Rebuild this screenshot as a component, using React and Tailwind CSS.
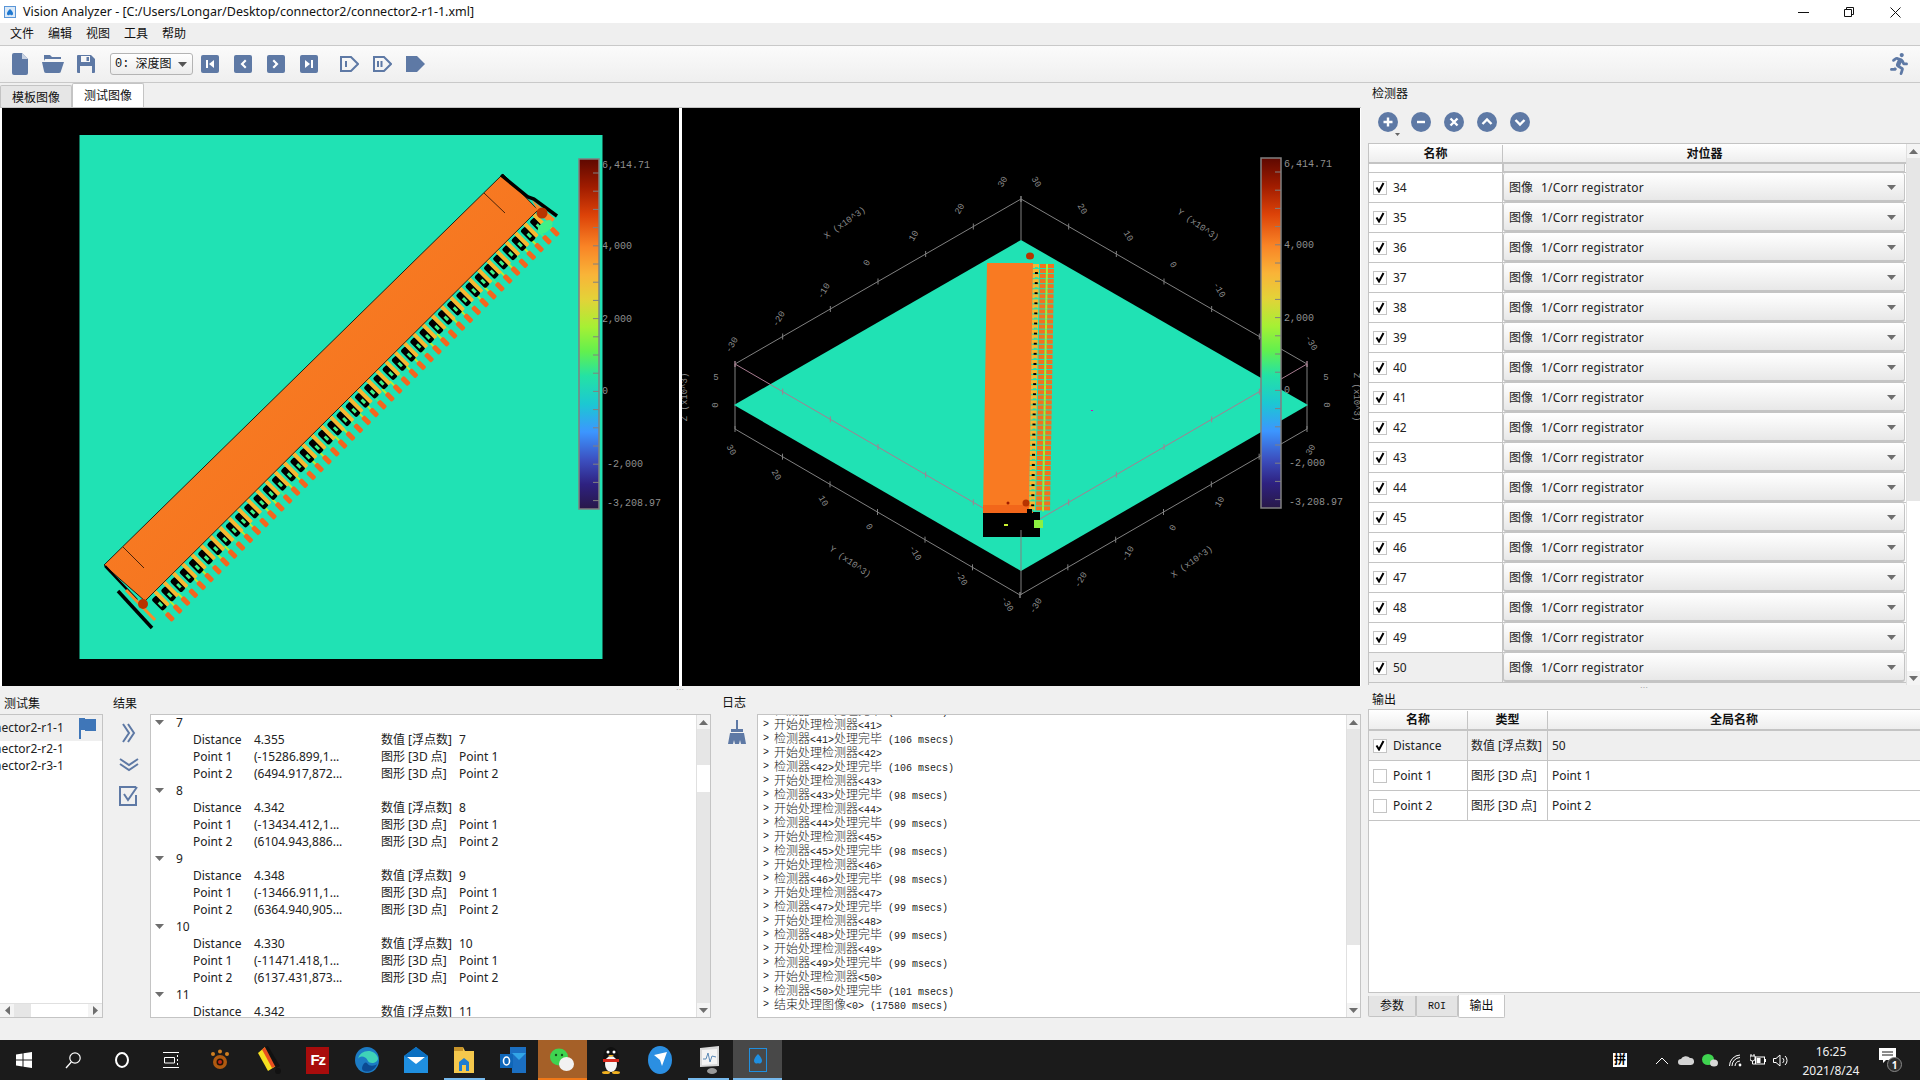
import React from "react";
import { FaRunning } from "react-icons/fa";

const BLUE = "#5e79a5";
const uiFont = "font-['Noto_Sans','Noto_Sans_CJK_SC',sans-serif]";

const cbStops = [
  [0, "#5e0800"], [0.08, "#a01c00"], [0.16, "#dc4208"], [0.25, "#f98426"], [0.33, "#f9b438"],
  [0.4, "#e4d238"], [0.48, "#a6f034"], [0.55, "#62f04e"], [0.62, "#24e2a4"], [0.7, "#1cc8d2"],
  [0.78, "#3c96ff"], [0.86, "#3c50c0"], [0.93, "#2e2180"], [1, "#281848"],
];

function ColorBar({ id, x, y }) {
  const labels = [
    ["6,414.71", 6, 2], ["4,000", 87, 2], ["2,000", 160, 2], ["0", 232, 2], ["-2,000", 305, 7], ["-3,208.97", 344, 7],
  ];
  const minor = Array.from({ length: 19 }, (_, i) => 14 + i * 18.2);
  return (
    <g>
      <defs>
        <linearGradient id={id} x1="0" y1="0" x2="0" y2="1">
          {cbStops.map(([o, c]) => <stop key={o} offset={o} stopColor={c} />)}
        </linearGradient>
      </defs>
      <rect x={x} y={y} width="20" height="350" fill={`url(#${id})`} stroke="#808080" strokeWidth="1.5" />
      {minor.map((m) => <line key={m} x1={x + 14} x2={x + 20} y1={y + m} y2={y + m} stroke="#808080" />)}
      {labels.map(([t, dy, dx]) => (
        <text key={t} x={x + 21 + dx} y={y + dy + 3} fill="#8f8f8f" fontSize="10" fontFamily="Liberation Mono, monospace">{t}</text>
      ))}
    </g>
  );
}

function LeftView() {
  // the terminal blocks and the pin tips repeat at different pitches along the connector edge
  const blocks = Array.from({ length: 42 }, (_, i) => {
    const x = 152 + (i / 41) * 378;
    return { i, x, y: 747 - x };
  });
  const tips = Array.from({ length: 50 }, (_, i) => {
    const x = 150 + (i / 49) * 385;
    return { i, x, y: 747 - x };
  });
  return (
    <svg viewBox="2 108 677 578" className="w-[677px] h-[578px] bg-black block">
      <rect x="79.5" y="135" width="523" height="524" fill="#20e2b4" />
      <defs>
        <linearGradient id="bodyGrad" x1="0" y1="0" x2="1" y2="1">
          <stop offset="0" stopColor="#fb8526" />
          <stop offset="1" stopColor="#f26a1c" />
        </linearGradient>
      </defs>
      {tips.map((p) => (
        <g key={p.i} transform={`translate(${p.x} ${p.y}) rotate(45)`}>
          <rect x="17" y="-1" width="7" height="2" fill={p.i % 3 ? "#b0f030" : "#3ff08a"} />
          <rect x="23" y="-2.5" width="10" height="5" rx="1.5" fill="#f4651e" />
        </g>
      ))}
      {blocks.map((p) => (
        <g key={p.i} transform={`translate(${p.x} ${p.y}) rotate(45)`}>
          <rect x="3" y="-3" width="16" height="7" rx="2" fill="#000" />
          <rect x="-1" y="-6.5" width="20" height="4" rx="1" fill="#f8b830" />
          <rect x="10" y="-1" width="5" height="3" fill="#3ff08a" />
        </g>
      ))}
      <polygon points="503,174 538,210 145,601 104,565" fill="url(#bodyGrad)" stroke="#000" strokeWidth="0.8" />
      <line x1="484" y1="193" x2="505" y2="213" stroke="#000" strokeWidth="0.7" />
      <line x1="123" y1="547" x2="144" y2="568" stroke="#000" strokeWidth="0.7" />
      <polygon points="532,200 555,219 550,224 538,212" fill="#f98a2a" />
      <polyline points="501,175 528,197 534,199 557,216" fill="none" stroke="#000" strokeWidth="3.5" />
      <polyline points="105,566 137,600" fill="none" stroke="#000" strokeWidth="2.5" />
      <polyline points="118,591 152,628" fill="none" stroke="#000" strokeWidth="3.5" />
      <polyline points="126,590 155,620" fill="none" stroke="#f98a2a" strokeWidth="3" />
      <circle cx="542" cy="213" r="5.5" fill="#b83400" />
      <circle cx="143" cy="604" r="5" fill="#b83400" />
      <ellipse cx="545" cy="227" rx="9" ry="5" transform="rotate(-40 545 227)" fill="#3ff08a" />
      <ColorBar id="cb1" x={579} y={159} />
    </svg>
  );
}

const ticks = [
  [1003, 182, -60, "30"], [1036, 182, 60, "30"], [960, 209, -60, "20"], [914, 236, -60, "10"], [867, 263, -60, "0"],
  [824, 291, -60, "-10"], [779, 319, -60, "-20"], [732, 345, -60, "-30"], [1082, 209, 60, "20"], [1128, 236, 60, "10"],
  [1173, 265, 60, "0"], [1219, 290, 60, "-10"], [1311, 343, 60, "-30"], [731, 450, 60, "30"], [776, 475, 60, "20"],
  [823, 501, 60, "10"], [869, 527, 60, "0"], [915, 553, 60, "-10"], [961, 578, 60, "-20"], [1007, 604, 60, "-30"],
  [1036, 606, -60, "-30"], [1081, 580, -60, "-20"], [1128, 554, -60, "-10"], [1173, 528, -60, "0"], [1220, 502, -60, "10"],
  [1311, 450, -60, "30"], [845, 223, -35, "X (x10^3)"], [1198, 225, 35, "Y (x10^3)"], [850, 562, 35, "Y (x10^3)"],
  [1192, 562, -35, "X (x10^3)"], [685, 397, -90, "Z (x10^3)"], [1356, 397, 90, "Z (x10^3)"], [716, 378, 0, "5"],
  [716, 405, -90, "0"], [1326, 378, 0, "5"], [1326, 405, 90, "0"],
];

function Edge({ from, to, color = "#808080", n = 6 }) {
  const marks = Array.from({ length: n + 1 }, (_, i) => [
    from[0] + ((to[0] - from[0]) * i) / n,
    from[1] + ((to[1] - from[1]) * i) / n,
  ]);
  return (
    <g stroke={color} strokeWidth="1">
      <line x1={from[0]} y1={from[1]} x2={to[0]} y2={to[1]} />
      {marks.map(([x, y]) => <line key={x} x1={x} y1={y - 3} x2={x} y2={y + 3} />)}
    </g>
  );
}

function RightView() {
  const rows = Array.from({ length: 49 }, (_, i) => i);
  return (
    <svg viewBox="682 108 678 578" className="w-[678px] h-[578px] bg-black block">
      <Edge from={[735, 364]} to={[1021, 199]} />
      <Edge from={[1307, 364]} to={[1021, 199]} />
      <Edge from={[735, 429]} to={[1020, 595]} />
      <Edge from={[1307, 429]} to={[1020, 595]} />
      <line x1="735" y1="364" x2="735" y2="429" stroke="#808080" />
      <line x1="1307" y1="364" x2="1307" y2="429" stroke="#808080" />
      <line x1="1021" y1="199" x2="1021" y2="240" stroke="#808080" />
      <polygon points="1021,240 1308,405 1021,571 734,405" fill="#20e2b4" />
      <Edge from={[735, 364]} to={[1021, 530]} color="#a87c90" />
      <Edge from={[1307, 364]} to={[1021, 530]} color="#a87c90" />
      <rect x="983" y="512" width="57" height="25" fill="#000" />
      <line x1="1021" y1="530" x2="1021" y2="595" stroke="#808080" />
      <polygon points="987,263 1033,263 1029,512 983,512" fill="#f97a22" />
      <rect x="983" y="505" width="50" height="8" fill="#f2661a" />
      {rows.map((i) => {
        const y = 264 + i * 5.05;
        const s = -(i * 4) / 49;
        return (
          <g key={i}>
            <rect x={1033 + s} y={y} width="6" height="4" fill="#f9b530" />
            <rect x={1035 + s} y={y + 3} width="3" height="2" fill={i % 2 ? "#000" : "#2fe0a0"} />
            <rect x={1040 + s} y={y} width="6" height="4" fill="#f4711e" />
            <rect x={1046 + s} y={y} width="2" height="5" fill="#a8f034" />
            <rect x={1048 + s} y={y} width="6" height="4" fill="#f4711e" />
          </g>
        );
      })}
      <ellipse cx="1030" cy="256" rx="4" ry="3.5" fill="#b83400" />
      <circle cx="1026" cy="503" r="3.5" fill="#b83400" />
      <circle cx="1008" cy="503" r="1.5" fill="#a01c00" />
      <rect x="1034" y="520" width="9" height="8" fill="#8cf040" />
      <rect x="1004" y="524" width="4" height="2" fill="#c8f030" />
      <rect x="1027" y="509" width="5" height="4" fill="#000" />
      <rect x="1091" y="410" width="2" height="1" fill="#e000c0" />
      {ticks.map(([x, y, r, t]) => (
        <text key={`${x}-${y}`} x={x} y={y} transform={`rotate(${r} ${x} ${y})`} textAnchor="middle" dominantBaseline="middle"
          fill="#8a8a8a" fontSize="9" fontFamily="Liberation Mono, monospace">{t}</text>
      ))}
      <ColorBar id="cb2" x={1261} y={158} />
    </svg>
  );
}

function Check({ on }) {
  return (
    <span className="w-[14px] h-[14px] bg-white border border-[#c4c4c4] flex items-center justify-center shrink-0">
      {on && (
        <svg width="10" height="11" viewBox="0 0 10 11">
          <path d="M1.5 5.5 L4 9.5 L8.5 1" fill="none" stroke="#000" strokeWidth="2" />
        </svg>
      )}
    </span>
  );
}

function Tri({ up, color = "#6e6e6e" }) {
  return (
    <svg width="9" height="5" viewBox="0 0 9 5">
      <path d={up ? "M0 5 L4.5 0 L9 5Z" : "M0 0 L9 0 L4.5 5Z"} fill={color} />
    </svg>
  );
}

function Combo() {
  return (
    <div className="h-full flex-1 flex items-center pl-[5px] pr-[8px] pt-[2px] rounded-[3px] border-b-2 border-x border-[#c4c4c4] bg-gradient-to-b from-white to-[#e8e8e8] text-[12px] text-[#222]">
      <span>图像</span>
      <span className="ml-[8px] tracking-[0.2px]">1/Corr registrator</span>
      <span className="ml-auto flex"><Tri /></span>
    </div>
  );
}

function ScrollV({ before, fill }) {
  return (
    <div className="w-[14px] h-full shrink-0 flex flex-col bg-[#f4f4f4] border-l border-[#e0e0e0]">
      <div className="h-[14px] flex items-center justify-center shrink-0"><Tri up /></div>
      <div className={`${before} bg-[#e6e6e6] shrink-0`} />
      <div className={`${fill} bg-white`} />
      <div className="flex-1 bg-[#e6e6e6]" />
      <div className="h-[14px] flex items-center justify-center shrink-0"><Tri /></div>
    </div>
  );
}

function DetectorTable() {
  const rows = Array.from({ length: 17 }, (_, i) => 34 + i);
  return (
    <div className="ml-[1px] w-[552px] h-[542px] flex border-t border-[#c4c4c4] border-l">
      <div className="flex-1 flex flex-col min-w-0 overflow-hidden">
        <div className="h-[20px] flex shrink-0 pt-[1px] border-b-2 border-[#c4c4c4] bg-gradient-to-b from-white to-[#eeeeee] font-bold text-[12px] text-[#111]">
          <div className="w-[134px] flex items-center justify-center border-r border-[#c4c4c4]">名称</div>
          <div className="flex-1 flex items-center justify-center">对位器</div>
        </div>
        <div className="h-[9px] shrink-0 flex border-b border-[#c4c4c4] bg-white">
          <div className="w-[134px] border-r border-[#c4c4c4]" />
          <div className="flex-1 bg-[#ececec] border-x border-b border-[#c4c4c4] mr-[1px]" />
        </div>
        {rows.map((n) => (
          <div key={n} className={`h-[30px] shrink-0 flex border-b border-[#c4c4c4] ${n === 50 ? "bg-[#efefef]" : "bg-white"}`}>
            <div className="w-[134px] flex items-center pl-[4px] gap-[6px] border-r border-[#c4c4c4] text-[12px] text-[#222]">
              <Check on />
              <span>{n}</span>
            </div>
            <div className="flex-1 flex pr-[1px]"><Combo /></div>
          </div>
        ))}
      </div>
      <ScrollV before="h-[343px]" fill="h-[171px]" />
    </div>
  );
}

function OutputTable() {
  const rows = [
    ["Distance", "数值 [浮点数]", "50", true],
    ["Point 1", "图形 [3D 点]", "Point 1", false],
    ["Point 2", "图形 [3D 点]", "Point 2", false],
  ];
  return (
    <div className="ml-[1px] w-[552px] h-[284px] flex flex-col border border-r-0 border-[#c4c4c4] bg-white">
      <div className="h-[21px] flex shrink-0 pt-[1px] border-b-2 border-[#c4c4c4] bg-gradient-to-b from-white to-[#eeeeee] font-bold text-[12px] text-[#111]">
        <div className="w-[99px] flex items-center justify-center border-r border-[#c4c4c4]">名称</div>
        <div className="w-[80px] flex items-center justify-center border-r border-[#c4c4c4]">类型</div>
        <div className="flex-1 flex items-center justify-center">全局名称</div>
      </div>
      {rows.map(([a, b, c, on]) => (
        <div key={a} className={`h-[30px] flex shrink-0 border-b border-[#c4c4c4] text-[12px] text-[#222] ${on ? "bg-[#efefef]" : "bg-white"}`}>
          <div className="w-[99px] flex items-center pl-[4px] gap-[6px] border-r border-[#c4c4c4]">
            <Check on={on} />
            <span>{a}</span>
          </div>
          <div className="w-[80px] flex items-center pl-[3px] border-r border-[#c4c4c4] whitespace-nowrap">{b}</div>
          <div className="flex-1 flex items-center pl-[4px]">{c}</div>
        </div>
      ))}
    </div>
  );
}

function TestList() {
  return (
    <div className="w-[103px] h-[304px] flex flex-col border border-l-0 border-[#c4c4c4] bg-white text-[12px] text-[#222]">
      <div className="h-[26px] bg-[#efefef] flex items-center justify-between pr-[5px] overflow-hidden">
        <span className="-ml-[6px]">nector2-r1-1</span>
        <svg width="19" height="22" viewBox="0 0 19 22">
          <path d="M1 1 H7 V2 H18 V14 H7 V13 H3 V22 H1Z" fill="#3f76b8" />
        </svg>
      </div>
      <div className="-mt-[1px] overflow-hidden">
        {["nector2-r2-1", "nector2-r3-1"].map((t) => (
          <div key={t} className="h-[17px] flex items-center -ml-[6px]">{t}</div>
        ))}
      </div>
      <div className="mt-auto h-[14px] flex bg-[#f4f4f4] border-t border-[#e0e0e0]">
        <div className="w-[14px] flex items-center justify-center"><svg width="5" height="9" viewBox="0 0 5 9"><path d="M5 0 L0 4.5 L5 9Z" fill="#6e6e6e" /></svg></div>
        <div className="w-[17px] bg-[#e6e6e6]" />
        <div className="flex-1 bg-white" />
        <div className="w-[14px] flex items-center justify-center"><svg width="5" height="9" viewBox="0 0 5 9"><path d="M0 0 L5 4.5 L0 9Z" fill="#6e6e6e" /></svg></div>
      </div>
    </div>
  );
}

const results = [
  ["7", "4.355", "(-15286.899,1...", "(6494.917,872..."],
  ["8", "4.342", "(-13434.412,1...", "(6104.943,886..."],
  ["9", "4.348", "(-13466.911,1...", "(6364.940,905..."],
  ["10", "4.330", "(-11471.418,1...", "(6137.431,873..."],
  ["11", "4.342", "", ""],
];

function ResultRow({ name, value, type, extra }) {
  return (
    <div className="h-[17px] flex items-center whitespace-nowrap">
      <span className="w-[61px] pl-[42px] box-content">{name}</span>
      <span className="w-[127px]">{value}</span>
      <span className="w-[78px]">{type}</span>
      <span>{extra}</span>
    </div>
  );
}

function ResultsTree() {
  return (
    <div className="w-[561px] h-[304px] flex border border-[#c4c4c4] bg-white text-[12px] text-[#222]">
      <div className="flex-1 overflow-hidden">
        <div className="-mt-[1px]">
          {results.map(([id, d, p1, p2]) => (
            <div key={id}>
              <div className="h-[17px] flex items-center">
                <span className="ml-[4px] w-[16px] flex"><Tri /></span>
                <span className="ml-[5px]">{id}</span>
              </div>
              <ResultRow name="Distance" value={d} type="数值 [浮点数]" extra={id} />
              <ResultRow name="Point 1" value={p1} type="图形 [3D 点]" extra="Point 1" />
              <ResultRow name="Point 2" value={p2} type="图形 [3D 点]" extra="Point 2" />
            </div>
          ))}
        </div>
      </div>
      <ScrollV before="h-[36px]" fill="h-[27px]" />
    </div>
  );
}

const logLines = [
  "检测器<40>处理完毕 (99 msecs)",
  "开始处理检测器<41>", "检测器<41>处理完毕 (106 msecs)",
  "开始处理检测器<42>", "检测器<42>处理完毕 (106 msecs)",
  "开始处理检测器<43>", "检测器<43>处理完毕 (98 msecs)",
  "开始处理检测器<44>", "检测器<44>处理完毕 (99 msecs)",
  "开始处理检测器<45>", "检测器<45>处理完毕 (98 msecs)",
  "开始处理检测器<46>", "检测器<46>处理完毕 (98 msecs)",
  "开始处理检测器<47>", "检测器<47>处理完毕 (99 msecs)",
  "开始处理检测器<48>", "检测器<48>处理完毕 (99 msecs)",
  "开始处理检测器<49>", "检测器<49>处理完毕 (99 msecs)",
  "开始处理检测器<50>", "检测器<50>处理完毕 (101 msecs)",
  "结束处理图像<0> (17580 msecs)",
];

// Latin runs are 10px mono so they sit in 6px cells next to the 12px CJK
function LogLine({ text }) {
  const parts = text.split(/([\u4e00-\u9fff]+)/).filter(Boolean);
  return (
    <div className="h-[14px] flex items-center whitespace-pre text-[#222]">
      <span className="w-[11px] pl-[5px] box-content text-[10px] font-['Liberation_Mono',monospace]">&gt;</span>
      <span>
        {parts.map((p, i) => /[\u4e00-\u9fff]/.test(p)
          ? <span key={i} className="text-[12px] font-['Noto_Sans_CJK_SC',sans-serif] font-light">{p}</span>
          : <span key={i} className="text-[10px] font-['Liberation_Mono',monospace]">{p}</span>)}
      </span>
    </div>
  );
}

function LogBox() {
  return (
    <div className="w-[604px] h-[304px] flex border border-[#c4c4c4] bg-white">
      <div className="flex-1 overflow-hidden">
        <div className="-mt-[12px]">
          {logLines.map((l) => <LogLine key={l} text={l} />)}
        </div>
      </div>
      <ScrollV before="h-[216px]" fill="h-[60px]" />
    </div>
  );
}

function SquareBtn({ d }) {
  return (
    <svg width="18" height="18" viewBox="0 0 18 18">
      <rect width="18" height="18" rx="2" fill={BLUE} />
      <path d={d} fill="#fff" />
    </svg>
  );
}

function Toolbar() {
  return (
    <div className="h-[38px] flex items-center shrink-0 border-y border-[#c9c9c9] bg-gradient-to-b from-[#fbfbfb] to-[#efefef]">
      <svg className="ml-[12px]" width="16" height="22" viewBox="0 0 16 22"><path d="M2 0 H10 L16 6 V20 A2 2 0 0 1 14 22 H2 A2 2 0 0 1 0 20 V2 A2 2 0 0 1 2 0Z" fill={BLUE} /><path d="M10 0 V6 H16Z" fill="#c8d2e2" /></svg>
      <svg className="ml-[14px]" width="22" height="18" viewBox="0 0 22 18"><path d="M2 0 H8 L10 2 H19 V4 H3 L2 6Z" fill={BLUE} /><path d="M0 7 H22 L19 16 A2 2 0 0 1 17 18 H4 A2 2 0 0 1 2 16Z" fill={BLUE} /></svg>
      <svg className="ml-[13px]" width="18" height="18" viewBox="0 0 18 18"><path fillRule="evenodd" d="M1 0 H14 L18 4 V17 A1 1 0 0 1 17 18 H1 A1 1 0 0 1 0 17 V1 A1 1 0 0 1 1 0Z M4 1 V7 H13 V1Z M9.5 2 H12 V6 H9.5Z M3 11 V18 H15 V11Z" fill={BLUE} /></svg>
      <div className="ml-[15px] w-[83px] h-[22px] rounded-[3px] border border-[#b4b4b4] bg-gradient-to-b from-white to-[#ececec] flex items-center pl-[4px] pr-[5px] text-[12px] text-[#111]">
        <span className="font-['Liberation_Mono',monospace] mr-[6px]">0:</span>
        <span>深度图</span>
        <span className="ml-auto flex"><Tri color="#555" /></span>
      </div>
      <div className="ml-[8px] flex gap-[15px]">
        <SquareBtn d="M5 5 H7 V13 H5Z M13 5 V13 L8 9Z" />
        <SquareBtn d="M11 4.5 L12.5 6 L9.5 9 L12.5 12 L11 13.5 L6.5 9Z" />
        <SquareBtn d="M7 4.5 L5.5 6 L8.5 9 L5.5 12 L7 13.5 L11.5 9Z" />
        <SquareBtn d="M11 5 H13 V13 H11Z M5 5 V13 L10 9Z" />
      </div>
      <div className="ml-[22px] flex gap-[14px]">
        <svg width="19" height="16" viewBox="0 0 19 16"><path d="M1 1 H11 L18 8 L11 15 H1Z M6 5 V11" fill="none" stroke={BLUE} strokeWidth="2" /></svg>
        <svg width="19" height="16" viewBox="0 0 19 16"><path d="M1 1 H11 L18 8 L11 15 H1Z M5 5 V11 M8.5 5 V11" fill="none" stroke={BLUE} strokeWidth="2" /></svg>
        <svg width="19" height="16" viewBox="0 0 19 16"><path d="M0 0 H11 L19 8 L11 16 H0Z" fill={BLUE} /></svg>
      </div>
      <FaRunning className="ml-auto mr-[10px]" size={22} color={BLUE} />
    </div>
  );
}

function CircleBtn({ d, stroke }) {
  return (
    <svg width="20" height="20" viewBox="0 0 20 20">
      <circle cx="10" cy="10" r="10" fill={BLUE} />
      <path d={d} fill="none" stroke="#fff" strokeWidth={stroke || 2.4} />
    </svg>
  );
}

function WinApp({ children, active, mark }) {
  return (
    <div className={`w-[48.9px] h-full flex items-center justify-center relative ${active || ""}`}>
      {children}
      {mark && <span className={`absolute bottom-0 left-[4px] right-[4px] h-[2px] ${mark}`} />}
    </div>
  );
}

function Taskbar() {
  return (
    <div className="h-[40px] shrink-0 flex items-center bg-[#1b1b1b] text-white text-[12px]">
      <WinApp><svg width="16" height="16" viewBox="0 0 16 16"><path d="M0 2.5 L6.5 1.5 V7.5 H0Z M7.5 1.3 L16 0 V7.5 H7.5Z M0 8.5 H6.5 V14.5 L0 13.5Z M7.5 8.5 H16 V16 L7.5 14.7Z" fill="#fff" /></svg></WinApp>
      <WinApp><svg width="18" height="18" viewBox="0 0 18 18"><circle cx="11" cy="7" r="5.2" fill="none" stroke="#fff" strokeWidth="1.2" /><path d="M7.3 11 L2 17" stroke="#fff" strokeWidth="1.3" /></svg></WinApp>
      <WinApp><svg width="16" height="18" viewBox="0 0 16 18"><ellipse cx="8" cy="9" rx="6" ry="7" fill="none" stroke="#fff" strokeWidth="2" /></svg></WinApp>
      <WinApp><svg width="16" height="16" viewBox="0 0 16 16" fill="none" stroke="#fff"><path d="M0 .5 H16 M0 15.5 H16 M1.5 5.5 H11.5 V11 H1.5Z M14.5 3 V5 M14.5 7 V9 M14.5 11 V13" /></svg></WinApp>
      <WinApp><svg width="24" height="24" viewBox="0 0 24 24"><circle cx="12" cy="14" r="7" fill="#b05a10" /><circle cx="5" cy="6" r="2" fill="#d08020" /><circle cx="12" cy="3.5" r="2" fill="#d08020" /><circle cx="19" cy="6" r="2" fill="#d08020" /><circle cx="12" cy="14" r="3.5" fill="#241204" /><circle cx="12" cy="14" r="2" fill="#c02818" /></svg></WinApp>
      <WinApp><svg width="26" height="28" viewBox="0 0 26 28"><path d="M2 7 L9 1 L20 20 L12 25Z" fill="#f6e020" /><path d="M6 3.5 L9 1 L20 20 L16 22Z" fill="#e85020" /><path d="M9 1 L12 0 L24 20 L20 22Z" fill="#111" /><circle cx="22" cy="25" r="3" fill="#111" /></svg></WinApp>
      <WinApp><div className="w-[23px] h-[27px] bg-[#a80c0c] flex items-center justify-center font-bold text-[15px] font-['Liberation_Sans',sans-serif] tracking-[-1px]">Fz</div></WinApp>
      <WinApp><svg width="24" height="26" viewBox="0 0 24 26"><ellipse cx="12" cy="13" rx="12" ry="13" fill="#1c7bc4" /><path d="M3 12 C5 2 20 1 23 11 C23 17 14 17 13 14 C10 8 4 9 3 12Z" fill="#3fd2b8" /><path d="M12 16 C14 20 20 19 22 17 C20 23 14 26 9 24 C4 22 10 13 12 16Z" fill="#0b4a92" /></svg></WinApp>
      <WinApp><svg width="24" height="26" viewBox="0 0 24 26"><path d="M0 9 L12 0 L24 9 V26 H0Z" fill="#1f8fe0" /><path d="M0 9 L12 0 L24 9 L12 16Z" fill="#0c6fc0" /><path d="M3 10 H21 L12 17Z" fill="#ffffff" /></svg></WinApp>
      <WinApp mark="bg-[#76b9ed]"><svg width="24" height="26" viewBox="0 0 24 26"><path d="M2 0 H11 L13 4 H22 V26 H2Z" fill="#f5c84c" /><rect x="2" y="0" width="9" height="4" fill="#c8942a" /><path d="M7 24 V15 L12 11 L17 15 V24Z" fill="#1f7dd0" /><rect x="10" y="18" width="4" height="6" fill="#f5c84c" /></svg></WinApp>
      <WinApp><svg width="26" height="26" viewBox="0 0 26 26"><path d="M10 0 H26 V26 H12 V20 H10Z" fill="#1b6fc2" /><path d="M12 6 H26 L19 13Z" fill="#32a5e6" /><rect x="0" y="7" width="13" height="14" fill="#0f66b8" /><ellipse cx="6.5" cy="14" rx="3" ry="4" fill="none" stroke="#fff" strokeWidth="1.6" /></svg></WinApp>
      <WinApp active="bg-[#a56028]" mark="!left-0 !right-0 bg-[#f07818]"><svg width="26" height="26" viewBox="0 0 26 26"><ellipse cx="10" cy="10" rx="9" ry="8.5" fill="#3fd450" /><ellipse cx="17.5" cy="17" rx="7.5" ry="7" fill="#f2f2f2" /><circle cx="7" cy="8" r="1.2" fill="#14501c" /><circle cx="13" cy="8" r="1.2" fill="#14501c" /></svg></WinApp>
      <WinApp><svg width="22" height="28" viewBox="0 0 22 28"><ellipse cx="11" cy="13" rx="8" ry="12" fill="#111" /><ellipse cx="11" cy="18" rx="6" ry="8" fill="#f5f5f5" /><path d="M3 13 H19 V16 H3Z" fill="#d8281c" /><circle cx="8" cy="6" r="1.5" fill="#fff" /><circle cx="14" cy="6" r="1.5" fill="#fff" /><path d="M8 9 H14 L11 11Z" fill="#f0b020" /><ellipse cx="6" cy="26.5" rx="4" ry="1.5" fill="#f0b020" /><ellipse cx="16" cy="26.5" rx="4" ry="1.5" fill="#f0b020" /></svg></WinApp>
      <WinApp><svg width="24" height="28" viewBox="0 0 24 28"><ellipse cx="12" cy="14" rx="12" ry="14" fill="#2b8fe2" /><path d="M6 9 L19 6 L14 20 L12 14Z" fill="#fff" /></svg></WinApp>
      <WinApp mark="bg-[#76b9ed]"><svg width="24" height="28" viewBox="0 0 24 28"><path d="M3 2 L22 0 V20 L3 21Z" fill="#d8d8d8" /><path d="M5 4 L20 3 V18 L5 19Z" fill="#f4f4f4" /><path d="M6 13 L9 13 L11 7 L13 16 L15 10 L19 11" fill="none" stroke="#5b8ab8" /><ellipse cx="15" cy="25" rx="5" ry="3" fill="#9a9a9a" /></svg></WinApp>
      <WinApp active="bg-[#484848]" mark="!left-0 !right-0 bg-[#76b9ed]"><svg width="18" height="24" viewBox="0 0 18 24"><rect x=".5" y=".5" width="17" height="23" fill="none" stroke="#1f8fe0" /><path d="M9 6 C12 9 13 11 13 13 A2.5 2.5 0 0 1 9 15 A2.5 2.5 0 0 1 5 13 C5 11 6 9 9 6Z" fill="#1f8fe0" /></svg></WinApp>
      <div className="ml-auto flex items-center">
        <span className="w-[14px] h-[14px] bg-white text-black text-[12px] leading-[14px] text-center font-bold">拼</span>
        <svg className="ml-[29px]" width="12" height="7" viewBox="0 0 12 7"><path d="M0 7 L6 1 L12 7" fill="none" stroke="#fff" /></svg>
        <svg className="ml-[10px]" width="16" height="10" viewBox="0 0 16 10"><path d="M3 10 A3 3 0 0 1 3 4 A5 4 0 0 1 12 3 A3.5 3.5 0 0 1 13 10Z" fill="#d4d4d4" /></svg>
        <svg className="ml-[8px]" width="16" height="13" viewBox="0 0 16 13"><ellipse cx="6" cy="5.5" rx="6" ry="5.5" fill="#3fd450" /><ellipse cx="12" cy="9" rx="4" ry="3.5" fill="#d8d8d8" /></svg>
        <svg className="ml-[11px]" width="13" height="13" viewBox="0 0 13 13" fill="none" stroke="#fff"><path d="M.5 12 A11 11 0 0 1 11 1 M3 12 A8.5 8.5 0 0 1 11 3.5 M6 12 A5.5 5.5 0 0 1 11 7" /><circle cx="11" cy="11" r="1.4" fill="#fff" stroke="none" /></svg>
        <svg className="ml-[8px]" width="16" height="12" viewBox="0 0 16 12" fill="none" stroke="#fff"><path d="M1 0 V2 M4 0 V2 M0 2 H5 V5 A2.5 2 0 0 1 0 5Z M2.5 7 V10 H5" /><rect x="5.5" y="3" width="9" height="7" /><rect x="6.5" y="4" width="4" height="5" fill="#fff" stroke="none" /><path d="M15.5 5 V8" /></svg>
        <svg className="ml-[7px]" width="15" height="13" viewBox="0 0 15 13" fill="none" stroke="#fff"><path d="M.5 4.5 H3 L7 1 V12 L3 8.5 H.5Z M9.5 4 A3 3 0 0 1 9.5 9 M12 2 A6 6 0 0 1 12 11" /></svg>
        <div className="ml-[12px] w-[62px] pt-[1px] flex flex-col items-center leading-[19px] text-[#f0f0f0] font-['Noto_Sans',sans-serif]">
          <span>16:25</span>
          <span>2021/8/24</span>
        </div>
        <div className="relative ml-[17px] mr-[23px] w-[18px] h-[24px]">
          <svg width="17" height="15" viewBox="0 0 17 15"><path d="M0 0 H17 V12 H7 L4 15 V12 H0Z" fill="#fff" /><path d="M3 4 H14 M3 7 H14" stroke="#1b1b1b" /></svg>
          <span className="absolute left-[8px] top-[9px] w-[15px] h-[15px] rounded-full bg-[#2e2e2e] border border-[#888] flex items-center justify-center text-[10px] font-bold leading-none">1</span>
        </div>
      </div>
    </div>
  );
}

function Dots({ className }) {
  return <span className={`absolute text-[8px] leading-none text-[#a8a8a8] ${className}`}>⋯</span>;
}

export default function App() {
  return (
    <div className={`w-[1920px] h-[1080px] flex flex-col overflow-hidden relative bg-[#f0f0f0] ${uiFont}`}>
      {/* title bar */}
      <div className="h-[23px] shrink-0 flex items-center pt-[1px] bg-white text-[12.5px] text-[#111]">
        <svg className="ml-[4px]" width="12" height="12" viewBox="0 0 12 12"><rect x=".5" y=".5" width="11" height="11" fill="#dbe9f7" stroke="#5a96d8" /><path d="M6 3 C8 5 9 6 9 7.5 A1.5 1.5 0 0 1 6 8 A1.5 1.5 0 0 1 3 7.5 C3 6 4 5 6 3Z" fill="#1f78d0" /></svg>
        <span className="ml-[7px] whitespace-nowrap">Vision Analyzer - [C:/Users/Longar/Desktop/connector2/connector2-r1-1.xml]</span>
        <div className="ml-auto flex items-center">
          <svg width="11" height="1" viewBox="0 0 11 1"><rect width="11" height="1" fill="#111" /></svg>
          <svg className="ml-[35px]" width="10" height="10" viewBox="0 0 10 10" fill="none" stroke="#111"><path d="M.5 2.5 H7.5 V9.5 H.5Z M2.5 2.5 V.5 H9.5 V7.5 H7.5" /></svg>
          <svg className="ml-[36px] mr-[19px]" width="11" height="11" viewBox="0 0 11 11" stroke="#111"><path d="M.5 .5 L10.5 10.5 M10.5 .5 L.5 10.5" /></svg>
        </div>
      </div>
      {/* menu bar */}
      <div className="h-[22px] shrink-0 flex items-center pl-[10px] gap-[14px] bg-[#efefef] text-[12px] text-[#111]">
        {["文件", "编辑", "视图", "工具", "帮助"].map((m) => <span key={m}>{m}</span>)}
      </div>
      <Toolbar />

      <div className="flex-1 flex min-h-0">
        {/* left side */}
        <div className="w-[1367px] shrink-0 flex flex-col">
          <div className="h-[24px] flex items-end shrink-0 text-[12px] text-[#111]">
            <div className="w-[72px] h-[22px] pt-[2px] flex items-center justify-center bg-[#e6e6e6] border border-[#c4c4c4] border-b-0 rounded-t-[2px]">模板图像</div>
            <div className="w-[72px] h-[24px] pt-[1px] flex items-center justify-center bg-white border border-[#c4c4c4] border-b-0 rounded-t-[2px]">测试图像</div>
          </div>
          <div className="w-[1361px] pl-[2px] flex gap-[3px] bg-white border-t border-[#c4c4c4] h-[579px] shrink-0">
            <LeftView />
            <RightView />
          </div>
          <div className="flex text-[12px] text-[#111] pt-[1px]">
            <div className="w-[103px]">
              <div className="h-[27px] flex items-end pl-[4px] pb-[1px]">测试集</div>
              <TestList />
            </div>
            <div className="w-[608px]">
              <div className="h-[27px] flex items-end pl-[10px] pb-[1px]">结果</div>
              <div className="flex">
                <div className="w-[47px] flex flex-col items-center pt-[9px] pl-[5px] gap-[14px]">
                  <svg width="14" height="20" viewBox="0 0 14 20" fill="none" stroke={BLUE} strokeWidth="2"><path d="M1 1 L7 10 L1 19 M6 1 L12 10 L6 19" /></svg>
                  <svg className="mt-[1px]" width="20" height="14" viewBox="0 0 20 14" fill="none" stroke={BLUE} strokeWidth="2"><path d="M1 1 L10 7 L19 1 M1 6 L10 12 L19 6" /></svg>
                  <svg width="20" height="20" viewBox="0 0 20 20" fill="none" stroke={BLUE} strokeWidth="2"><path d="M17 9 V19 H1 V1 H17 M5 8 L9 14 L18 1" /></svg>
                </div>
                <ResultsTree />
              </div>
            </div>
            <div className="flex-1">
              <div className="h-[27px] flex items-end pl-[11px] pb-[2px]">日志</div>
              <div className="flex">
                <div className="w-[46px] flex flex-col items-center pt-[6px] pl-[5px]">
                  <svg width="18" height="24" viewBox="0 0 18 24"><rect x="8" y="0" width="2" height="11" fill={BLUE} /><rect x="3" y="9" width="12" height="3" fill={BLUE} /><path d="M2 13 H16 L18 24 H13 L12 20 L11 24 H7 L6 20 L5 24 H0Z" fill={BLUE} /></svg>
                </div>
                <LogBox />
              </div>
            </div>
          </div>
        </div>

        {/* right side */}
        <div className="flex-1 flex flex-col text-[12px] text-[#111]">
          <div className="h-[20px] flex items-end pl-[5px] shrink-0">检测器</div>
          <div className="h-[40px] flex items-center pl-[11px] pb-[2px] gap-[13px] shrink-0 relative">
            <CircleBtn d="M10 5.5 V14.5 M5.5 10 H14.5" />
            <CircleBtn d="M6 10 H14" />
            <CircleBtn d="M6.5 6.5 L13.5 13.5 M13.5 6.5 L6.5 13.5" />
            <CircleBtn d="M5.5 12 L10 7.5 L14.5 12" />
            <CircleBtn d="M5.5 8 L10 12.5 L14.5 8" />
            <span className="absolute left-[28px] top-[30px] flex"><svg width="5" height="3" viewBox="0 0 5 3"><path d="M0 0 H5 L2.5 3Z" fill="#666" /></svg></span>
          </div>
          <DetectorTable />
          <div className="h-[24px] flex items-end pl-[5px] shrink-0">输出</div>
          <OutputTable />
          <div className="ml-[1px] mt-[2px] flex items-start text-[12px] text-[#111]">
            <div className="w-[48px] h-[21px] mt-[1px] flex items-center justify-center bg-[#e4e4e4] border border-[#c4c4c4] border-t-0 rounded-b-[2px]">参数</div>
            <div className="w-[42px] h-[21px] mt-[1px] flex items-center justify-center bg-[#e4e4e4] border border-[#c4c4c4] border-t-0 rounded-b-[2px] text-[10px] font-['Liberation_Mono',monospace]">ROI</div>
            <div className="w-[47px] h-[23px] flex items-center justify-center bg-white border border-[#c4c4c4] border-t-0 rounded-b-[2px]">输出</div>
          </div>
        </div>
      </div>

      <Taskbar />
      <Dots className="left-[676px] top-[686px]" />
      <Dots className="left-[1640px] top-[684px]" />
    </div>
  );
}
